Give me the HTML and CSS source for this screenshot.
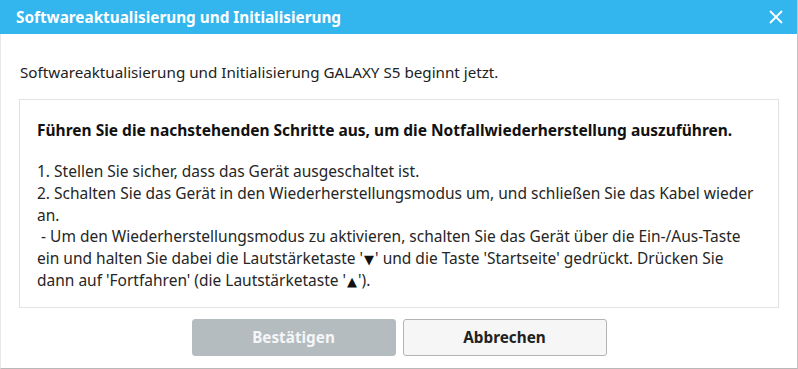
FILE: index.html
```html
<!DOCTYPE html>
<html lang="de">
<head>
    <meta charset="UTF-8">
    <title>Softwareaktualisierung und Initialisierung</title>
    <link rel="stylesheet" href="styles.css">
</head>
<body>
    <div class="dialog">
        <div class="titlebar">
            <span class="title">Softwareaktualisierung und Initialisierung</span>
            <span class="close">
                <svg width="14" height="14" viewBox="0 0 14 14">
                    <path d="M1 1 L13 13 M13 1 L1 13" stroke="#fff" stroke-width="1.8" fill="none"/>
                </svg>
            </span>
        </div>
        <div class="content">
            <p class="intro">Softwareaktualisierung und Initialisierung GALAXY S5 beginnt jetzt.</p>
            <div class="box">
                <p class="heading">Führen Sie die nachstehenden Schritte aus, um die Notfallwiederherstellung auszuführen.</p>
                <p class="steps">
                    1. Stellen Sie sicher, dass das Gerät ausgeschaltet ist.<br>
                    2. Schalten Sie das Gerät in den Wiederherstellungsmodus um, und schließen Sie das Kabel wieder an.<br>
                    &nbsp;- Um den Wiederherstellungsmodus zu aktivieren, schalten Sie das Gerät über die Ein-/Aus-Taste ein und halten Sie dabei die Lautstärketaste '<span class="tri">▼</span>' und die Taste 'Startseite' gedrückt. Drücken Sie dann auf 'Fortfahren' (die Lautstärketaste '<span class="tri">▲</span>').
                </p>
            </div>
            <div class="buttons">
                <button class="btn confirm" disabled>Bestätigen</button>
                <button class="btn cancel">Abbrechen</button>
            </div>
        </div>
    </div>
</body>
</html>
```

FILE: styles.css
```css
body {
    margin: 0;
    background: #fff;
    font-family: "Noto Sans", "Open Sans", sans-serif;
}
.dialog {
    box-sizing: border-box;
    width: 798px;
    height: 369px;
    border-right: 1px solid #c4c4c4;
    border-bottom: 1px solid #b8b8b8;
    border-left: 1px solid #e8e8e8;
    background: #fff;
}
.titlebar {
    height: 34px;
    background: #33b5ee;
    display: flex;
    align-items: center;
    justify-content: space-between;
    padding: 0 14px 0 16px;
    margin-left: -1px;
}
.title {
    color: #fff;
    font-weight: bold;
    font-size: 15.3px;
}
.close {
    display: flex;
}
.content {
    padding: 0 18px;
}
.intro {
    margin: 28px 0 0 1px;
    font-size: 15.2px;
    line-height: 21px;
    color: #222;
}
.box {
    margin-top: 16px;
    border: 1px solid #e2e2e2;
    padding: 20px 17px 15px 17px;
}
.heading {
    margin: 0;
    font-weight: bold;
    font-size: 15.5px;
    line-height: 21px;
    color: #111;
}
.steps {
    margin: 20px 0 0 0;
    font-size: 15.5px;
    line-height: 21.8px;
    color: #262626;
}
.tri {
    display: inline-block;
    font-family: "DejaVu Sans", sans-serif;
    font-size: 13px;
    line-height: 1;
    margin: 0 1px;
    color: #111;
}
.buttons {
    display: flex;
    justify-content: center;
    gap: 7px;
    margin-top: 11px;
}
.btn {
    width: 204px;
    height: 37px;
    border-radius: 3px;
    font-family: inherit;
    font-weight: bold;
    font-size: 15.3px;
}
.confirm {
    background: #b5bcc0;
    border: 1px solid #b5bcc0;
    color: #f4f6f7;
}
.cancel {
    background: #f6f6f6;
    border: 1px solid #b4b4b4;
    color: #222;
}
```
